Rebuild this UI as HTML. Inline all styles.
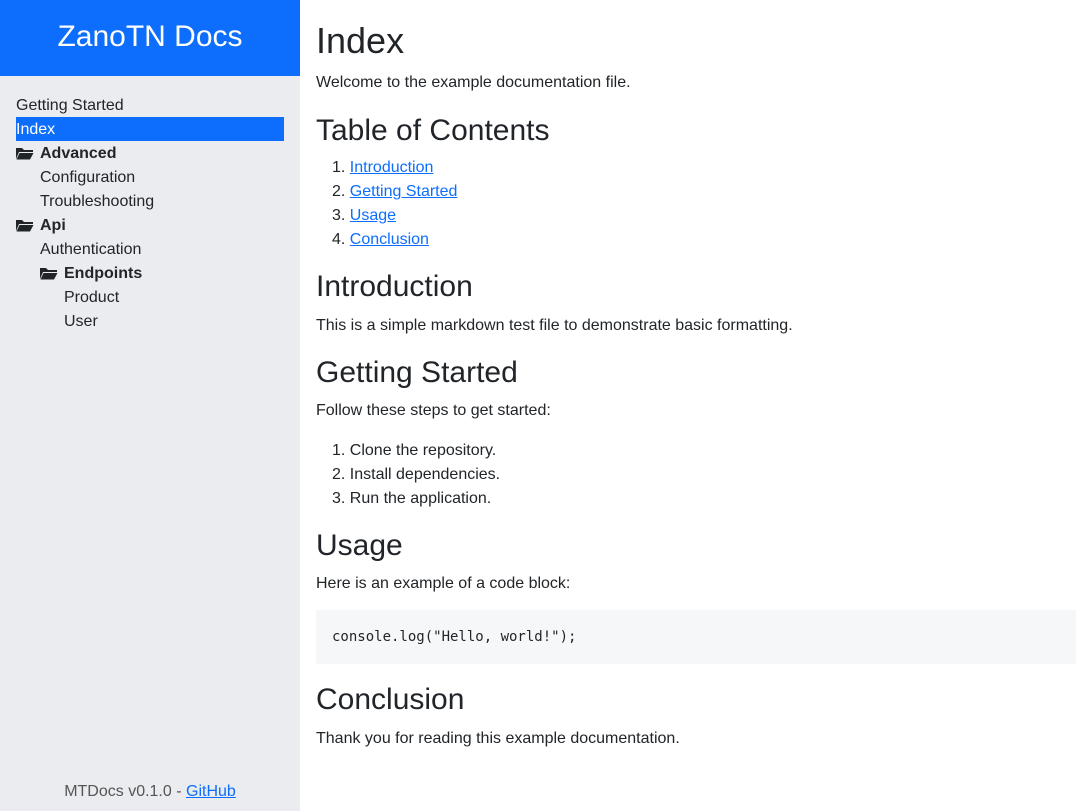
<!DOCTYPE html>
<html><head><style>
*{margin:0;padding:0;box-sizing:border-box}
body{width:1092px;height:811px;overflow:hidden;font-family:"Liberation Sans",sans-serif;color:#212529;background:#fff;position:relative}
.sb{position:absolute;left:0;top:0;width:300px;height:811px;background:#ebecf0}
.hd{height:76px;background:#0d6efd;color:#fff;font-size:30px;text-align:center;line-height:74px}
.it{position:absolute;font-size:16px;line-height:24px;white-space:nowrap}
.b{font-weight:bold}
.sel{background:#0d6efd;color:#fff;width:268px;line-height:24px}
svg{vertical-align:-2px;margin-right:6px}
.m{position:absolute;left:316px;white-space:nowrap}
.h1{font-size:36px;line-height:40px}
.h2{font-size:30px;line-height:36px}
.p{font-size:16px;line-height:24px}
a{color:#0d6efd}
.pre{position:absolute;left:316px;top:610px;width:760px;height:54px;background:#f6f7f9;font-family:"DejaVu Sans Mono",monospace;font-size:14px;line-height:54px;padding-left:16px}
</style></head><body>
<div class="sb">
<div class="hd">ZanoTN Docs</div>
<div class="it" style="left:16px;top:94px">Getting Started</div>
<div class="it sel" style="left:16px;top:117px;padding-top:1px;height:24px">Index</div>
<div class="it b" style="left:16px;top:142px"><svg width="18" height="14" viewBox="0 0 18 14"><path d="M0 2v11l3-7h14V4H8L6 2z M3.5 7L0.5 13.5h13.5l3.5-6.5z" fill="#212529"/></svg>Advanced</div>
<div class="it" style="left:40px;top:166px">Configuration</div>
<div class="it" style="left:40px;top:190px">Troubleshooting</div>
<div class="it b" style="left:16px;top:214px"><svg width="18" height="14" viewBox="0 0 18 14"><path d="M0 2v11l3-7h14V4H8L6 2z M3.5 7L0.5 13.5h13.5l3.5-6.5z" fill="#212529"/></svg>Api</div>
<div class="it" style="left:40px;top:238px">Authentication</div>
<div class="it b" style="left:40px;top:262px"><svg width="18" height="14" viewBox="0 0 18 14"><path d="M0 2v11l3-7h14V4H8L6 2z M3.5 7L0.5 13.5h13.5l3.5-6.5z" fill="#212529"/></svg>Endpoints</div>
<div class="it" style="left:64px;top:286px">Product</div>
<div class="it" style="left:64px;top:310px">User</div>
<div class="it" style="left:0;width:300px;text-align:center;top:780px;color:#555">MTDocs v0.1.0 - <a href="#">GitHub</a></div>
</div>
<div class="m h1" style="top:21px">Index</div>
<div class="m p" style="top:71px">Welcome to the example documentation file.</div>
<div class="m h2" style="top:113px">Table of Contents</div>
<div class="m p" style="top:156px;left:332px">1. <a href="#">Introduction</a></div>
<div class="m p" style="top:180px;left:332px">2. <a href="#">Getting Started</a></div>
<div class="m p" style="top:204px;left:332px">3. <a href="#">Usage</a></div>
<div class="m p" style="top:228px;left:332px">4. <a href="#">Conclusion</a></div>
<div class="m h2" style="top:269px">Introduction</div>
<div class="m p" style="top:314px">This is a simple markdown test file to demonstrate basic formatting.</div>
<div class="m h2" style="top:355px">Getting Started</div>
<div class="m p" style="top:399px">Follow these steps to get started:</div>
<div class="m p" style="top:439px;left:332px">1. Clone the repository.</div>
<div class="m p" style="top:463px;left:332px">2. Install dependencies.</div>
<div class="m p" style="top:487px;left:332px">3. Run the application.</div>
<div class="m h2" style="top:528px">Usage</div>
<div class="m p" style="top:572px">Here is an example of a code block:</div>
<div class="pre">console.log("Hello, world!");</div>
<div class="m h2" style="top:682px">Conclusion</div>
<div class="m p" style="top:727px">Thank you for reading this example documentation.</div>
</body></html>
